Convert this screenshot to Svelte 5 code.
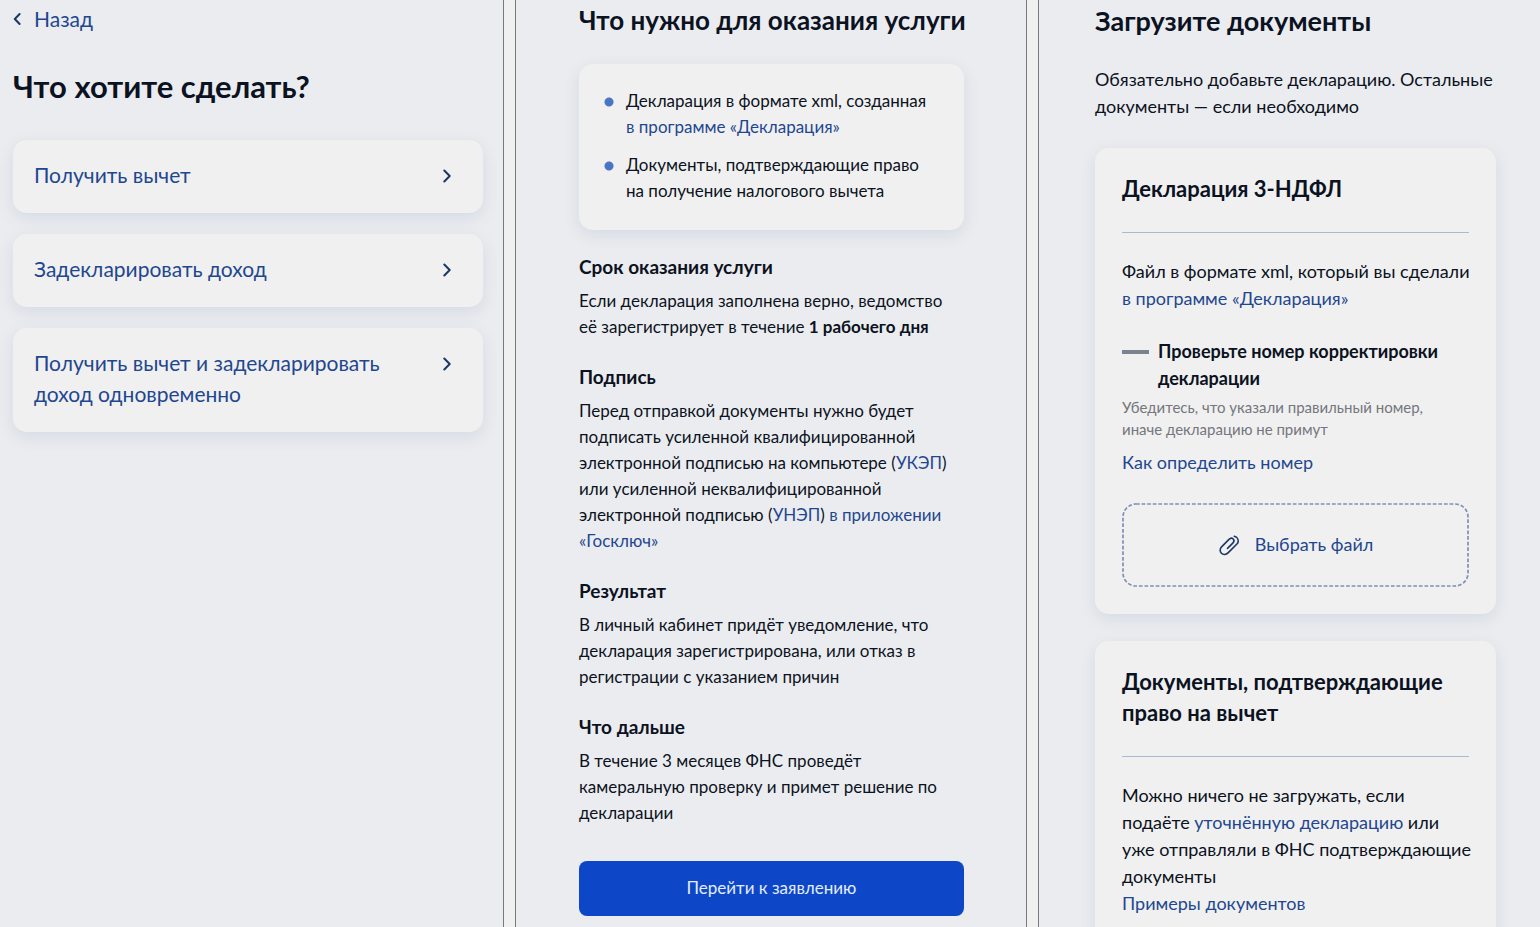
<script lang="ts">
	const actions: string[] = [
		'Получить вычет',
		'Задекларировать доход',
		'Получить вычет и задекларировать доход одновременно'
	];
</script>

<div class="screens">
	<!-- Choice of action -->
	<section class="screen choice">
		<a class="back" href="#back">
			<svg class="back-icon" viewBox="0 0 8 14" aria-hidden="true">
				<path d="M6.6 2 1.8 7l4.8 5" />
			</svg>
			Назад
		</a>
		<h1>Что хотите сделать?</h1>
		<div class="actions">
			{#each actions as action}
				<button class="card action">
					<span>{action}</span>
					<svg class="chevron" viewBox="0 0 8 14" aria-hidden="true">
						<path d="M1.3 1.500 6.700 7l-5.400 5.500" />
					</svg>
				</button>
			{/each}
		</div>
	</section>

	<!-- Service description -->
	<section class="screen service">
		<h2>Что нужно для оказания услуги</h2>
		<ul class="card needs">
			<li>Декларация в формате xml, созданная <a href="#program">в программе «Декларация»</a></li>
			<li>Документы, подтверждающие право на&nbsp;получение налогового вычета</li>
		</ul>

		<h3>Срок оказания услуги</h3>
		<p>Если декларация заполнена верно, ведомство её зарегистрирует в течение <b>1 рабочего дня</b></p>

		<h3>Подпись</h3>
		<p>
			Перед отправкой документы нужно будет подписать усиленной квалифицированной
			электронной подписью на компьютере (<a href="#ukep">УКЭП</a>) или усиленной
			неквалифицированной электронной подписью (<a href="#unep">УНЭП</a>)
			<a href="#goskey">в приложении «Госключ»</a>
		</p>

		<h3>Результат</h3>
		<p>В личный кабинет придёт уведомление, что декларация зарегистрирована, или отказ в регистрации с указанием причин</p>

		<h3>Что дальше</h3>
		<p>В течение 3 месяцев ФНС проведёт камеральную проверку и примет решение по декларации</p>

		<button class="submit">Перейти к заявлению</button>
	</section>

	<!-- Document upload -->
	<section class="screen upload">
		<h2>Загрузите документы</h2>
		<p>Обязательно добавьте декларацию. Остальные документы — если необходимо</p>

		<article class="card doc">
			<h3>Декларация 3-НДФЛ</h3>
			<hr />
			<p>Файл в формате xml, который вы сделали <a href="#program">в программе «Декларация»</a></p>
			<div class="notice">
				<span class="dash"></span>
				<b>Проверьте номер корректировки декларации</b>
			</div>
			<p class="hint">Убедитесь, что указали правильный номер,<br />иначе декларацию не примут</p>
			<a class="how" href="#number">Как определить номер</a>
			<button class="file">
				<svg class="outline" aria-hidden="true">
					<rect x="1" y="1" rx="13" />
				</svg>
				<svg class="clip" viewBox="0 0 22 22" aria-hidden="true">
					<path d="M16.300 2.200c2.400.6 4.200 3 3.900 5.400-.1.900-.6 1.700-1.300 2.400l-8.600 8.600c-2.100 2.100-5.100 2.400-6.900.6-1.800-1.800-1.600-4.600.4-6.600l7.200-7.200c1.300-1.300 3.100-1.500 4.200-.4 1.100 1.100.9 2.800-.4 4.100l-5.300 5.300" />
				</svg>
				Выбрать файл
			</button>
		</article>

		<article class="card doc">
			<h3>Документы, подтверждающие право на вычет</h3>
			<hr />
			<p>
				Можно ничего не загружать, если подаёте <a href="#corrected">уточнённую декларацию</a> или
				уже отправляли в ФНС подтверждающие документы
			</p>
			<a href="#examples">Примеры документов</a>
		</article>
	</section>
</div>

<style>
	:global(body) {
		margin: 0;
		background: #f0f0f0;
	}

	.screens {
		display: grid;
		grid-template-columns: 504fr 512fr 502fr;
		gap: 11px;
		height: 100vh;
		overflow: hidden;
		font-family: Lato, 'Open Sans', sans-serif;
		color: #0b1222;
	}

	.screen {
		box-sizing: border-box;
		min-width: 0;
		background: #ebecef;
		border: 0 solid #77797c;
	}

	h1,
	h2,
	h3,
	p {
		margin: 0;
	}

	h2 {
		font-size: 26px;
		line-height: 32px;
		font-weight: 700;
		white-space: nowrap;
	}

	a {
		color: #1f478f;
		text-decoration: none;
	}

	button {
		font: inherit;
		border: none;
		cursor: pointer;
	}

	svg {
		flex: none;
		fill: none;
		stroke: #1c3766;
		stroke-width: 2;
		stroke-linecap: round;
		stroke-linejoin: round;
	}

	.card {
		background: #f0f0f0;
		border-radius: 14px;
		box-shadow: 0 5px 16px rgba(60, 90, 160, 0.12);
	}

	/* Choice of action */
	.choice {
		padding: 3px 20px 0 13px;
		border-right-width: 1px;
		font-size: 21px;
		line-height: 31px;
	}

	.back {
		display: flex;
		align-items: center;
		gap: 13px;
	}

	.back-icon,
	.chevron {
		width: 8px;
		height: 14px;
	}

	h1 {
		margin: 32px 0 34px;
		font-size: 31px;
		line-height: 40px;
		font-weight: 700;
	}

	.actions {
		display: flex;
		flex-direction: column;
		gap: 21px;
	}

	.action {
		display: flex;
		align-items: flex-start;
		justify-content: space-between;
		gap: 48px;
		padding: 19px 32px 23px 21px;
		color: #1f478f;
		text-align: left;
	}

	.chevron {
		margin-top: 10px;
	}

	/* Service description */
	.service {
		padding: 4px 62px 0 63px;
		border-left-width: 1px;
		border-right-width: 1px;
		font-size: 17px;
		line-height: 26px;
	}

	.needs {
		display: flex;
		flex-direction: column;
		gap: 12px;
		margin: 28px 0 0;
		padding: 24px 32px 26px 25px;
		list-style: none;
	}

	.needs li {
		padding-left: 22px;
		background: radial-gradient(circle at 5px 14px, #4a75c4 4px, transparent 5px) no-repeat;
	}

	.service h3 {
		margin: 24px 0 8px;
		font-size: 19px;
		line-height: 26px;
	}

	.submit {
		width: 100%;
		margin-top: 35px;
		padding: 14px 0 15px;
		border-radius: 8px;
		background: #0d47c7;
		color: #e3edff;
	}

	/* Document upload */
	.upload {
		padding: 5px 44px 0 56px;
		border-left-width: 1px;
		font-size: 18px;
		line-height: 27px;
	}

	.upload h2 {
		font-size: 27px;
	}

	.upload > p {
		margin: 29px 0 28px;
	}

	.doc {
		margin-bottom: 27px;
		padding: 25px 27px 27px;
	}

	.doc h3 {
		font-size: 22px;
		line-height: 31px;
	}

	/* Body text may run slightly past the rule */
	.doc p {
		margin-right: -4px;
	}

	hr {
		height: 1px;
		margin: 28px 0 25px;
		border: none;
		background: #a9b9d0;
	}

	.notice {
		display: flex;
		gap: 9px;
		margin: 26px 0 4px;
	}

	.dash {
		flex: none;
		width: 27px;
		height: 4px;
		margin-top: 12px;
		background: #7b818e;
	}

	.doc .hint {
		font-size: 15px;
		line-height: 22px;
		color: #74777d;
	}

	.how {
		display: block;
		margin: 9px 0 27px;
	}

	.file {
		position: relative;
		display: flex;
		align-items: center;
		justify-content: center;
		gap: 15px;
		width: 100%;
		padding: 28px 0 29px;
		background: none;
		color: #1f478f;
	}

	.outline {
		position: absolute;
		inset: 0;
		width: 100%;
		height: 100%;
	}

	.outline rect {
		width: calc(100% - 2px);
		height: calc(100% - 2px);
		stroke: #7d90b6;
		stroke-width: 1.7;
		stroke-linecap: butt;
		stroke-dasharray: 3.7 1.9;
	}

	.clip {
		width: 22px;
		height: 22px;
	}

	.clip path {
		stroke-width: 1.6;
	}
</style>
